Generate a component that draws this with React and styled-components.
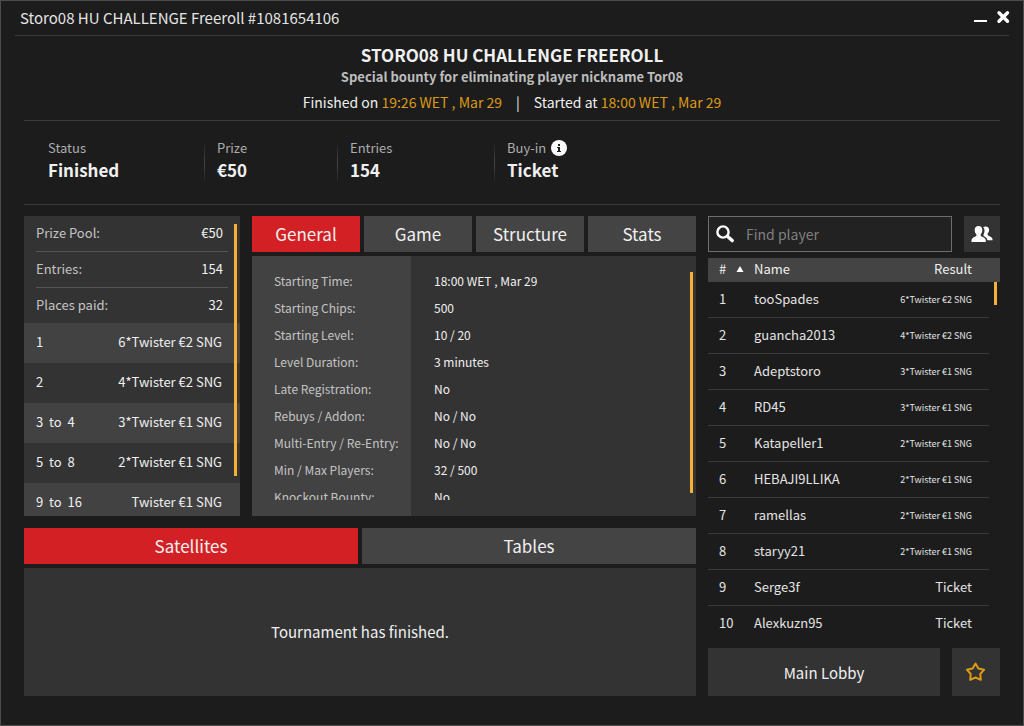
import { useState } from "react";
import styled, { createGlobalStyle, css } from "styled-components";

const GlobalStyle = createGlobalStyle`
    *, *::before, *::after {
        box-sizing: border-box;
    }

    body {
        margin: 0;
        background: #1c1c1c;
    }

    body, button, input {
        font-family: "Noto Sans CJK SC", "Noto Sans", sans-serif;
    }

    h1, h2, p, dl, dd {
        margin: 0;
    }

    button {
        border: 0;
        padding: 0;
        color: inherit;
        cursor: pointer;
    }
`

const Window = styled.div`
    display: flex;
    flex-direction: column;
    min-height: 100vh;
    background: #1c1c1c;
    border: 1px solid #4a4d4b;
    color: #f0f0f0;
    font-size: 13px;
    line-height: 20px;
`

const TitleBar = styled.header`
    display: flex;
    align-items: center;
    justify-content: space-between;
    height: 35px;
    margin: 0 14px;
    padding-left: 5px;
    border-bottom: 1px solid #3a3a3a;
    color: #e4e4e4;
    font-size: 15px;
`

const WindowButtons = styled.div`
    display: flex;
    gap: 7px;

    button {
        display: flex;
        background: none;
    }

    svg {
        overflow: visible;
    }
`

const Heading = styled.section`
    display: flex;
    flex-direction: column;
    align-items: center;
    height: 85px;
    margin: 0 23px;
    padding-top: 7px;
    border-bottom: 1px solid #3a3a3a;

    h1 {
        font-size: 17px;
        line-height: 24px;
    }

    h2 {
        color: #bdbdbd;
        font-size: 13px;
        line-height: 20px;
    }
`

const Dates = styled.p`
    display: flex;
    gap: 14px;
    margin-top: 5px;
    font-size: 14px;

    em {
        color: #dd9a16;
        font-style: normal;
    }
`

const Summary = styled.section`
    display: flex;
    height: 84px;
    margin: 0 23px;
    padding: 17px 0 0 11px;
    border-bottom: 1px solid #3a3a3a;
`

const SummaryItem = styled.div`
    position: relative;
    width: ${(props) => props.$width}px;
    padding-left: 13px;

    &:not(:first-child)::before {
        content: "";
        position: absolute;
        left: 0;
        top: 7px;
        width: 1px;
        height: 36px;
        background: linear-gradient(#262626, #444, #262626);
    }

    span {
        display: flex;
        align-items: center;
        gap: 5px;
        color: #adadad;
    }

    strong {
        display: block;
        font-size: 17px;
        line-height: 24px;
    }
`

const Main = styled.main`
    display: grid;
    grid-template-columns: 216px minmax(0, 1fr) 292px;
    grid-template-rows: 300px minmax(168px, 1fr);
    gap: 12px;
    flex: 1;
    padding: 11px 23px 29px;
`

const Panel = styled.div`
    position: relative;
    overflow: hidden;
    background: #333;
`

const ScrollThumb = styled.div`
    position: absolute;
    top: ${(props) => props.$top}px;
    right: 3px;
    width: 3px;
    height: ${(props) => props.$height}px;
    background: #f4b133;
`

const Pool = styled.dl`
    margin: 0 12px;

    div {
        display: flex;
        justify-content: space-between;
        height: 36px;
        padding: 7px 5px 0 0;
        border-bottom: 1px solid #555;
    }

    div:last-child {
        height: 35px;
        border: 0;
    }

    dt {
        color: #c4c4c4;
    }
`

const PayoutTable = styled.table`
    width: 100%;
    border-spacing: 0;

    tr {
        height: 40px;
    }

    tr:nth-child(odd) {
        background: #424242;
    }

    td {
        padding: 0 0 2px 12px;
        white-space: pre;
    }

    td:last-child {
        padding: 0 18px 2px 0;
        text-align: right;
    }
`

const Column = styled.section`
    display: flex;
    flex-direction: column;
    gap: 4px;
    min-width: 0;
    ${(props) => props.$wide && css`
        grid-column: 1 / 3;
    `}

    > ${Panel} {
        flex: 1;
    }
`

const TabBar = styled.div`
    display: flex;
    gap: 4px;
`

const Tab = styled.button`
    flex: 1;
    height: 36px;
    background: ${(props) => (props.$active ? "#d22025" : "#444")};
    font-size: 17px;
    line-height: 24px;
`

const Details = styled(Panel)`
    padding: 11px 0 16px;
    background: linear-gradient(to right, #424242 159px, #333 159px);
`

const DetailsList = styled.dl`
    display: grid;
    grid-template-columns: 160px 1fr;
    height: 233px;
    overflow: hidden;
    padding-left: 22px;
    font-size: 12px;
    line-height: 27px;

    dt {
        color: #c4c4c4;
    }
`

const Message = styled(Panel)`
    display: flex;
    align-items: center;
    justify-content: center;
    font-size: 15px;
`

const Side = styled.aside`
    display: flex;
    flex-direction: column;
    grid-column: 3;
    grid-row: 1 / 3;
`

const SearchRow = styled.div`
    display: flex;
    gap: 12px;
    margin-bottom: 6px;
`

const SearchBox = styled.label`
    display: flex;
    align-items: center;
    flex: 1;
    gap: 11px;
    height: 36px;
    padding: 0 7px;
    border: 1px solid #6e6e6e;
    background: #222;

    input {
        flex: 1;
        min-width: 0;
        padding: 0;
        border: 0;
        outline: 0;
        background: none;
        color: #f0f0f0;
        font-size: 14px;
    }

    input::placeholder {
        color: #808080;
    }
`

const SquareButton = styled.button`
    display: flex;
    align-items: center;
    justify-content: center;
    width: ${(props) => props.$size}px;
    height: ${(props) => props.$size}px;
    background: #333;
`

const Players = styled.div`
    position: relative;
    flex: 1;
`

const PlayerTable = styled.table`
    width: 100%;
    border-spacing: 0;
    table-layout: fixed;

    th {
        height: 24px;
        padding: 0 0 2px;
        background: #444;
        font-weight: 400;
        text-align: left;
    }

    td {
        height: 36px;
        padding: 0 0 2px;
        border-bottom: 1px solid #3a3a3a;
        color: #e4e4e4;
    }

    tr:last-child td, td:last-child {
        border-bottom: 0;
    }

    th:first-child, td:first-child {
        width: 46px;
        padding-left: 11px;
    }

    th:nth-child(3), td:nth-child(3) {
        width: 110px;
        padding-right: 17px;
        text-align: right;
    }

    th:last-child {
        width: 11px;
    }
`

const SortLabel = styled.span`
    display: flex;
    align-items: center;
    gap: 10px;
`

const Result = styled.span`
    font-size: ${(props) => (props.$small ? 9 : 13)}px;
`

const Actions = styled.div`
    display: flex;
    gap: 12px;
`

const LobbyButton = styled.button`
    flex: 1;
    background: #333;
    font-size: 15px;
`

const pool = [
    ["Prize Pool:", "€50"],
    ["Entries:", "154"],
    ["Places paid:", "32"],
];

const payouts = [
    ["1", "6*Twister €2 SNG"],
    ["2", "4*Twister €2 SNG"],
    ["3  to  4", "3*Twister €1 SNG"],
    ["5  to  8", "2*Twister €1 SNG"],
    ["9  to  16", "Twister €1 SNG"],
];

const details = [
    ["Starting Time:", "18:00 WET , Mar 29"],
    ["Starting Chips:", "500"],
    ["Starting Level:", "10 / 20"],
    ["Level Duration:", "3 minutes"],
    ["Late Registration:", "No"],
    ["Rebuys / Addon:", "No / No"],
    ["Multi-Entry / Re-Entry:", "No / No"],
    ["Min / Max Players:", "32 / 500"],
    ["Knockout Bounty:", "No"],
];

const players = [
    ["tooSpades", "6*Twister €2 SNG"],
    ["guancha2013", "4*Twister €2 SNG"],
    ["Adeptstoro", "3*Twister €1 SNG"],
    ["RD45", "3*Twister €1 SNG"],
    ["Katapeller1", "2*Twister €1 SNG"],
    ["HEBAJI9LLIKA", "2*Twister €1 SNG"],
    ["ramellas", "2*Twister €1 SNG"],
    ["staryy21", "2*Twister €1 SNG"],
    ["Serge3f", "Ticket"],
    ["Alexkuzn95", "Ticket"],
];

const MinimizeIcon = () => (
    <svg width="15" height="16" viewBox="0 0 15 16">
        <path d="M2 10h13v2H2z" fill="#fff" />
    </svg>
)

const CloseIcon = () => (
    <svg width="15" height="16" viewBox="0 0 15 16">
        <path d="M5 2.800l8.500 8.500M13.500 2.800l-8.500 8.500" stroke="#fff" strokeWidth="3.4" strokeLinecap="round" />
    </svg>
)

const InfoIcon = () => (
    <svg width="16" height="16" viewBox="0 0 16 16">
        <circle cx="8" cy="8" r="8" fill="#fff" />
        <path d="M7 4h2v2H7zM6 7h3v4h1v1H6v-1h1V8H6z" fill="#1c1c1c" />
    </svg>
)

const SearchIcon = () => (
    <svg width="19" height="19" viewBox="0 0 19 19" fill="none" stroke="#fff">
        <circle cx="7" cy="7" r="5.6" strokeWidth="2.4" />
        <path d="M11.6 11.4l4.600 4.200" strokeWidth="3.4" strokeLinecap="round" />
    </svg>
)

const PeopleIcon = () => (
    <svg width="22" height="18" viewBox="0 0 22 18" fill="#fff">
        <path d="M7.500 1c2.400 0 3.800 1.500 3.800 3.900 0 1.800-.6 3.300-1.600 4.200v1.700c.2 1 4.900 1.500 5.100 4.400V17H.5v-1.800c.2-2.900 4.600-3.400 4.800-4.400V9.100c-1-.9-1.600-2.400-1.600-4.200C3.700 2.500 5.100 1 7.500 1z" />
        <path d="M12.200 2.300c.6-.6 1.400-.9 2.500-.9 2.200 0 3.400 1.300 3.400 3.400 0 1.600-.5 2.900-1.400 3.700v1.600c.2.900 4.600 1.600 4.800 4.200v.9h-5.100c-.3-2-1.800-3.200-3.900-4.100V9.500c.7-1.200 1.100-2.900 1-4.500-.1-1.100-.6-2-1.300-2.700z" />
    </svg>
)

const SortIcon = () => (
    <svg width="8" height="8" viewBox="0 0 8 8">
        <path d="M4 1l3.500 6h-7z" fill="#fff" />
    </svg>
)

const StarIcon = () => (
    <svg width="22" height="22" viewBox="0 0 22 22">
        <path
            d="M10.500 2.500l2.900 5 5.700 1.200-3.800 4.300.5 5.800-5.300-2.300-5.300 2.300.5-5.800-3.800-4.300 5.700-1.200z"
            fill="none"
            stroke="#dd9a16"
            strokeWidth="2"
            strokeLinejoin="round"
        />
    </svg>
)

const App = () => {
    const [tab, setTab] = useState("General");
    const [lowerTab, setLowerTab] = useState("Satellites");

    return (
        <Window>
            <GlobalStyle />
            <TitleBar>
                Storo08 HU CHALLENGE Freeroll #1081654106
                <WindowButtons>
                    <button aria-label="Minimize"><MinimizeIcon /></button>
                    <button aria-label="Close"><CloseIcon /></button>
                </WindowButtons>
            </TitleBar>

            <Heading>
                <h1>STORO08 HU CHALLENGE FREEROLL</h1>
                <h2>Special bounty for eliminating player nickname Tor08</h2>
                <Dates>
                    <span>Finished on <em>19:26 WET , Mar 29</em></span>
                    <span>|</span>
                    <span>Started at <em>18:00 WET , Mar 29</em></span>
                </Dates>
            </Heading>

            <Summary>
                <SummaryItem $width={169}><span>Status</span><strong>Finished</strong></SummaryItem>
                <SummaryItem $width={133}><span>Prize</span><strong>€50</strong></SummaryItem>
                <SummaryItem $width={157}><span>Entries</span><strong>154</strong></SummaryItem>
                <SummaryItem $width={157}><span>Buy-in <InfoIcon /></span><strong>Ticket</strong></SummaryItem>
            </Summary>

            <Main>
                <Panel>
                    <Pool>
                        {pool.map(([label, value]) => (
                            <div key={label}><dt>{label}</dt><dd>{value}</dd></div>
                        ))}
                    </Pool>
                    <PayoutTable>
                        <tbody>
                            {payouts.map(([place, prize]) => (
                                <tr key={place}><td>{place}</td><td>{prize}</td></tr>
                            ))}
                        </tbody>
                    </PayoutTable>
                    <ScrollThumb $top={8} $height={252} />
                </Panel>

                <Column>
                    <TabBar>
                        {["General", "Game", "Structure", "Stats"].map((name) => (
                            <Tab key={name} $active={name === tab} onClick={() => setTab(name)}>{name}</Tab>
                        ))}
                    </TabBar>
                    <Details>
                        <DetailsList>
                            {details.map(([label, value]) => [
                                <dt key={label}>{label}</dt>,
                                <dd key={label + "value"}>{value}</dd>,
                            ])}
                        </DetailsList>
                        <ScrollThumb $top={16} $height={221} />
                    </Details>
                </Column>

                <Side>
                    <SearchRow>
                        <SearchBox>
                            <SearchIcon />
                            <input type="text" placeholder="Find player" aria-label="Find player" />
                        </SearchBox>
                        <SquareButton $size={36} aria-label="Players"><PeopleIcon /></SquareButton>
                    </SearchRow>
                    <Players>
                        <PlayerTable>
                            <thead>
                                <tr>
                                    <th><SortLabel># <SortIcon /></SortLabel></th>
                                    <th>Name</th>
                                    <th>Result</th>
                                    <th />
                                </tr>
                            </thead>
                            <tbody>
                                {players.map(([name, result], index) => (
                                    <tr key={name}>
                                        <td>{index + 1}</td>
                                        <td>{name}</td>
                                        <td><Result $small={result !== "Ticket"}>{result}</Result></td>
                                        <td />
                                    </tr>
                                ))}
                            </tbody>
                        </PlayerTable>
                        <ScrollThumb $top={24} $height={23} />
                    </Players>
                    <Actions>
                        <LobbyButton>Main Lobby</LobbyButton>
                        <SquareButton $size={48} aria-label="Favourite"><StarIcon /></SquareButton>
                    </Actions>
                </Side>

                <Column $wide>
                    <TabBar>
                        {["Satellites", "Tables"].map((name) => (
                            <Tab key={name} $active={name === lowerTab} onClick={() => setLowerTab(name)}>{name}</Tab>
                        ))}
                    </TabBar>
                    <Message>Tournament has finished.</Message>
                </Column>
            </Main>
        </Window>
    )
}
export default App;
